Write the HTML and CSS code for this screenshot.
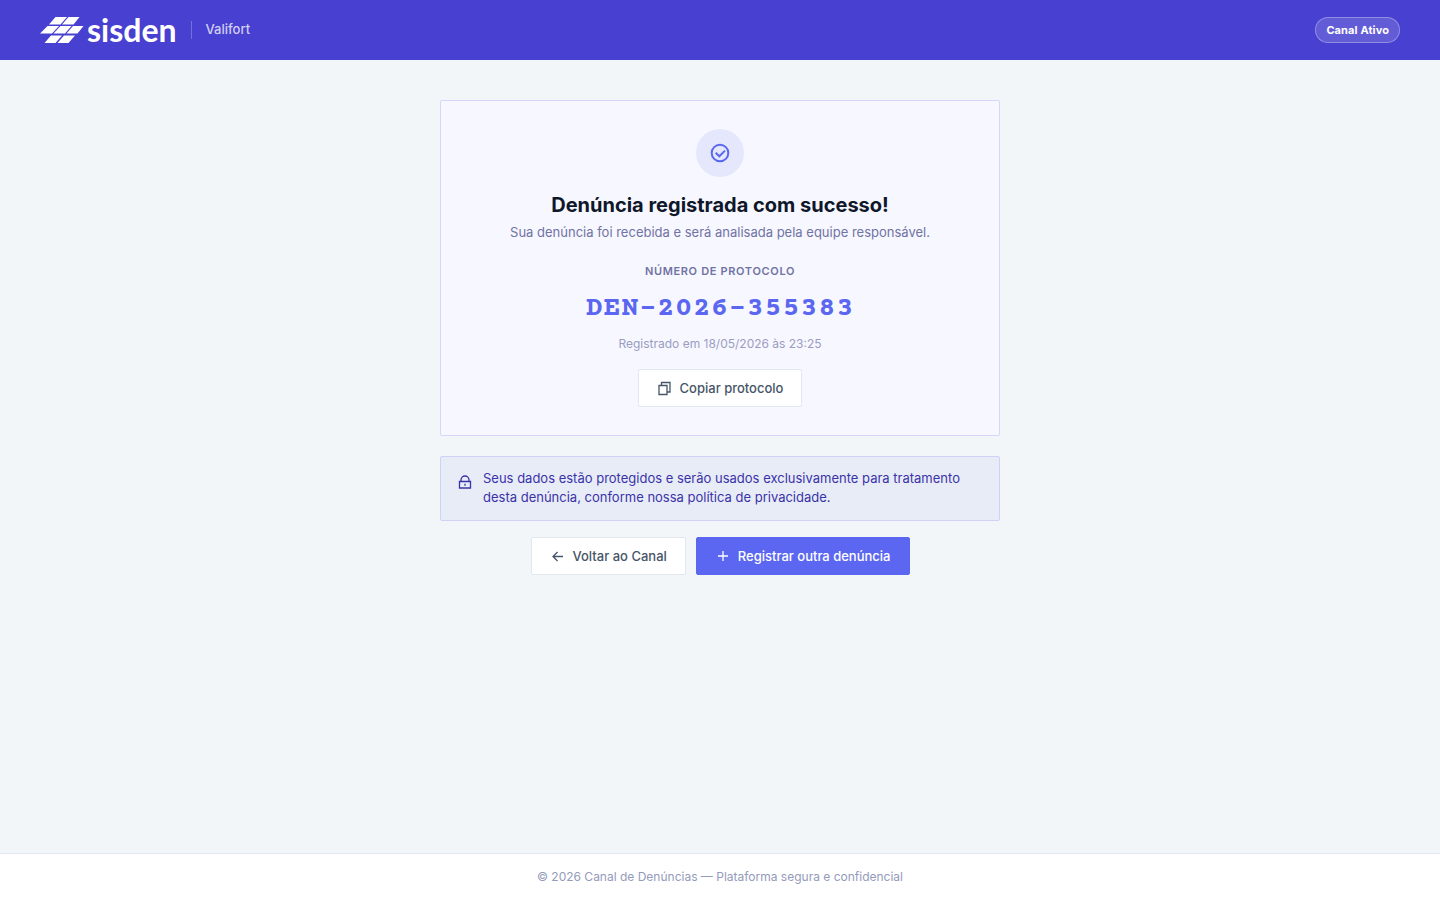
FILE: index.html
```
<!DOCTYPE html>
<html lang="pt-BR">
<head>
  <meta charset="UTF-8">
  <meta name="viewport" content="width=device-width, initial-scale=1.0">
  <title>Denúncia registrada - Valifort</title>
  <link rel="stylesheet" href="styles.css">
</head>
<body>
  <header class="topbar">
    <div class="brand">
      <a class="logo" href="#">
        <svg class="logo-mark" viewBox="0 0 44 26" aria-hidden="true">
          <path d="M15.500 0H27L20.500 7.500H9ZM28.500 0H39.500L33.500 7.500H22Z"/>
          <path d="M7.500 9H19L12 16.500H0ZM20.500 9H31.500L25 16.500H13.500ZM33 9H43.500L37.500 16.500H26.500Z"/>
          <path d="M11 18.500H22L15.500 26H4.500ZM24 18.500H35L28.500 26H17.500Z"/>
        </svg>
        <span class="logo-text">sisden</span>
      </a>
      <span class="divider"></span>
      <span class="company">Valifort</span>
    </div>
    <span class="status">Canal Ativo</span>
  </header>

  <main class="content">
    <section class="card">
      <div class="check">
        <svg viewBox="0 0 24 24" aria-hidden="true">
          <circle cx="12" cy="12" r="8.300"/>
          <path d="M7.700 11.700l3.600 3.600 5.700-5.700"/>
        </svg>
      </div>
      <h1>Denúncia registrada com sucesso!</h1>
      <p class="subtitle">Sua denúncia foi recebida e será analisada pela equipe responsável.</p>
      <div class="label">Número de protocolo</div>
      <div class="protocol" id="protocolo">DEN-2026-355383</div>
      <div class="date">Registrado em 18/05/2026 às 23:25</div>
      <button class="btn" type="button" id="copiar">
        <svg viewBox="0 0 16 16" aria-hidden="true">
          <path d="M2 5.500h8v9H2zM4.500 5.500v-3h8.500v9.500h-3"/>
        </svg>
        Copiar protocolo
      </button>
    </section>

    <div class="notice">
      <svg viewBox="0 0 16 16" aria-hidden="true">
        <path d="M2.500 7.500h11v6.500h-11zM4 7.500V6a4 4 0 0 1 8 0v1.500"/>
        <path d="M8 9.700v2"/>
      </svg>
      <p>Seus dados estão protegidos e serão usados exclusivamente para tratamento desta denúncia, conforme nossa política de privacidade.</p>
    </div>

    <div class="actions">
      <a class="btn" href="#">
        <svg viewBox="0 0 16 16" aria-hidden="true">
          <path d="M13 8.500H3M7.500 4l-4.500 4.500 4.500 4.500"/>
        </svg>
        Voltar ao Canal
      </a>
      <a class="btn btn-primary" href="#">
        <svg viewBox="0 0 16 16" aria-hidden="true">
          <path d="M8 3v10M3 8h10"/>
        </svg>
        Registrar outra denúncia
      </a>
    </div>
  </main>

  <footer class="footer">© 2026 Canal de Denúncias — Plataforma segura e confidencial</footer>

  <script>
    const botao = document.getElementById('copiar');
    const protocolo = document.getElementById('protocolo');

    botao.addEventListener('click', () => {
      navigator.clipboard.writeText(protocolo.textContent);
    });
  </script>
</body>
</html>
```
FILE: styles.css
```
* {
  box-sizing: border-box;
}
body {
  margin: 0;
  min-height: 100vh;
  display: flex;
  flex-direction: column;
  font-family: Inter, sans-serif;
  font-size: 13px;
  line-height: 1.5;
  background-color: #f2f6f9;
  color: #0f172a;
}
h1, p {
  margin: 0;
}
a {
  color: inherit;
  text-decoration: none;
}
svg {
  fill: none;
  stroke: currentColor;
}

/* Cabeçalho */
.topbar {
  height: 60px;
  padding: 0 40px;
  display: flex;
  justify-content: space-between;
  align-items: center;
  background-color: #4840d0;
  color: #fff;
}
.brand {
  display: flex;
  align-items: center;
  gap: 14px;
}
.logo {
  display: flex;
  align-items: center;
  gap: 3px;
}
.logo-mark {
  width: 44px;
  height: 26px;
  fill: #fff;
  stroke: none;
}
.logo-text {
  font-family: Lato, sans-serif;
  font-size: 32px;
  font-weight: 700;
  line-height: 30px;
}
.divider {
  width: 1px;
  height: 18px;
  background-color: rgba(255, 255, 255, 0.25);
}
.company {
  font-weight: 500;
  color: rgba(255, 255, 255, 0.75);
}
.status {
  padding: 4px 10px;
  border: 1px solid rgba(255, 255, 255, 0.3);
  border-radius: 20px;
  background-color: rgba(255, 255, 255, 0.15);
  font-size: 11px;
  font-weight: 700;
  line-height: 16px;
  letter-spacing: 0.01em;
}

/* Conteúdo */
.content {
  flex: 1;
  width: 100%;
  max-width: 600px;
  margin: 0 auto;
  padding: 40px 20px;
}
.card {
  padding: 28px;
  display: flex;
  flex-direction: column;
  align-items: center;
  text-align: center;
  background-color: #f7f7ff;
  border: 1px solid #d5d6f8;
  border-radius: 2px;
}
.check {
  width: 48px;
  height: 48px;
  margin-bottom: 12px;
  display: flex;
  justify-content: center;
  align-items: center;
  border-radius: 50%;
  background-color: #e5e8fd;
  color: #5b67f1;
}
.check svg {
  width: 24px;
  height: 24px;
  stroke-width: 2;
}
h1 {
  font-size: 20px;
  font-weight: 700;
  line-height: 32px;
}
.subtitle {
  margin: 2px 0 20px;
  color: #7073a3;
}
.label {
  font-size: 11px;
  font-weight: 600;
  line-height: 16px;
  letter-spacing: 0.06em;
  text-transform: uppercase;
  color: #7073a3;
}
.protocol {
  margin: 10px 0 6px;
  font-family: "Courier Prime", "Liberation Mono", monospace;
  font-size: 28px;
  font-weight: 700;
  line-height: 40px;
  letter-spacing: 0.04em;
  color: #5b67f1;
}
.date {
  margin-bottom: 16px;
  font-size: 12px;
  color: #9a9dc2;
}
.btn {
  height: 38px;
  padding: 0 18px;
  display: inline-flex;
  align-items: center;
  gap: 7px;
  border: 1px solid #e2e8f0;
  border-radius: 2px;
  background-color: #fff;
  color: #475569;
  font-family: inherit;
  font-size: 13px;
  font-weight: 500;
  line-height: 20px;
  cursor: pointer;
}
.btn svg {
  width: 16px;
  height: 16px;
  stroke-width: 1.3;
}
.btn-primary {
  background-color: #5b67f1;
  border-color: #5b67f1;
  color: #fff;
}
.notice {
  margin-top: 20px;
  padding: 12px 16px;
  display: flex;
  gap: 10px;
  background-color: #e8ecf7;
  border: 1px solid #cfd1f7;
  border-radius: 2px;
  color: #3a33a8;
}
.notice svg {
  flex-shrink: 0;
  width: 16px;
  height: 16px;
  margin-top: 5px;
  stroke-width: 1.3;
}
.actions {
  margin-top: 16px;
  display: flex;
  flex-wrap: wrap;
  justify-content: center;
  gap: 10px;
}

/* Rodapé */
.footer {
  padding: 14px 20px;
  border-top: 1px solid #e2e8f0;
  background-color: #fff;
  text-align: center;
  font-size: 12px;
  color: #949bbb;
}
```
